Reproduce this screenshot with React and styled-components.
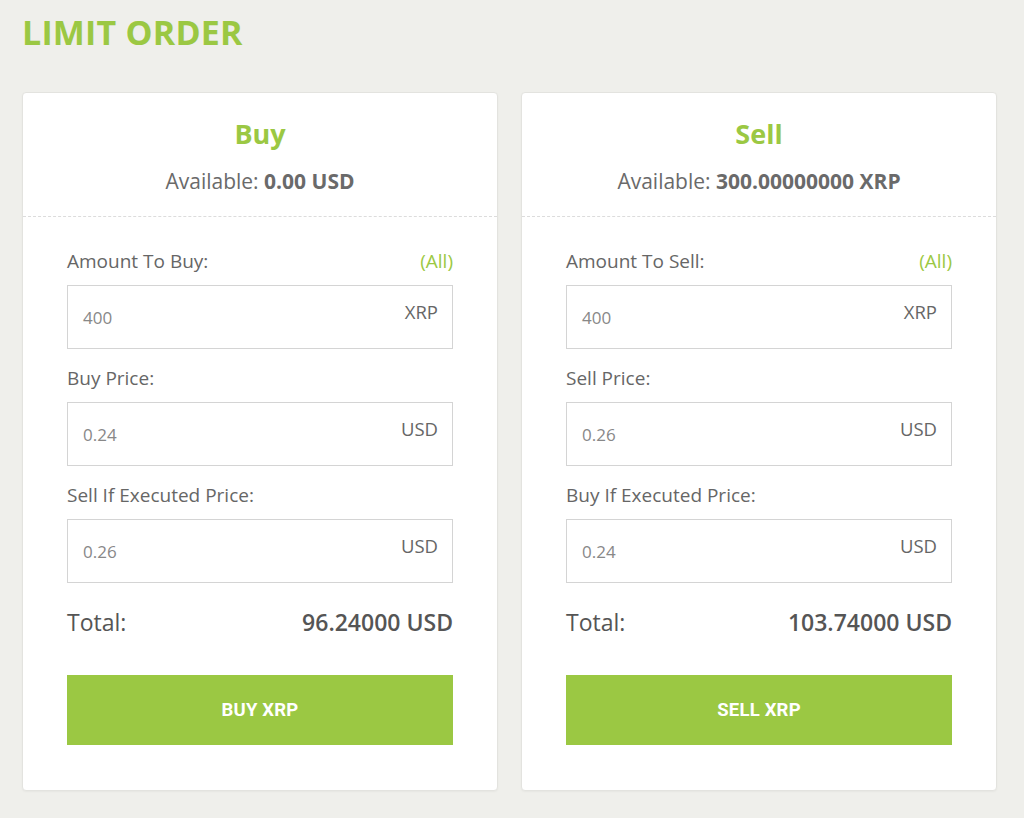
import React from "react";
import styled, { createGlobalStyle } from "styled-components";

const Global = createGlobalStyle`
  html, body { margin: 0; padding: 0; }
  body {
    background: #efefeb;
    font-family: "Open Sans", "Liberation Sans", sans-serif;
    color: #666;
  }
`;

const GREEN = "#9bc843";

const Page = styled.div`
  padding: 7px 22px 28px 22px;
  width: 1024px;
  box-sizing: border-box;
  min-height: 818px;
`;

const Title = styled.h1`
  margin: 0 0 35px 0;
  font-size: 34px;
  line-height: 50px;
  font-weight: 700;
  color: ${GREEN};
  letter-spacing: 0.2px;
`;

const Columns = styled.div`
  display: grid;
  grid-template-columns: 476px 476px;
  gap: 23px;
`;

const Card = styled.div`
  background: #fff;
  border: 1px solid #e3e3df;
  border-radius: 4px;
  box-shadow: 0 1px 2px rgba(0, 0, 0, 0.04);
`;

const CardHead = styled.div`
  border-bottom: 1px dashed #dcdcdc;
  padding: 22px 0 21px;
  text-align: center;
`;

const Side = styled.h2`
  margin: 0;
  font-size: 27px;
  line-height: 38px;
  font-weight: 700;
  color: ${GREEN};
`;

const Avail = styled.div`
  margin-top: 14px;
  font-size: 21px;
  line-height: 28px;
  color: #6a6a6a;
  b { font-weight: 700; color: #6a6a6a; }
`;

const Body = styled.div`
  padding: 32px 44px 45px 44px;
`;

const LabelRow = styled.div`
  display: flex;
  justify-content: space-between;
  align-items: baseline;
  font-size: 19px;
  line-height: 24px;
  color: #666;
  margin-bottom: 12px;
`;

const AllLink = styled.span`
  color: ${GREEN};
`;

const Field = styled.div`
  height: 64px;
  box-sizing: border-box;
  border: 1px solid #d4d4d4;
  display: flex;
  justify-content: space-between;
  align-items: flex-start;
  padding: 0 14px 0 15px;
  margin-bottom: 17px;
`;

const Value = styled.span`
  font-family: "Open Sans", "Liberation Sans", sans-serif;
  font-size: 17px;
  line-height: 22px;
  color: #888;
  padding-top: 21px;
`;

const Unit = styled.span`
  font-size: 18.5px;
  line-height: 24px;
  color: #666;
  padding-top: 14px;
`;

const TotalRow = styled.div`
  display: flex;
  justify-content: space-between;
  align-items: baseline;
  font-size: 23px;
  line-height: 30px;
  color: #555;
  margin-top: 24px;
  margin-bottom: 38px;
  span:last-child { font-weight: 600; }
`;

const Action = styled.button`
  display: block;
  width: 100%;
  height: 70px;
  border: none;
  background: ${GREEN};
  color: #fff;
  font-family: Roboto, "Liberation Sans", sans-serif;
  font-weight: 700;
  font-size: 18.5px;
  letter-spacing: 0.2px;
  cursor: pointer;
`;

function OrderCard({ side, available, amountLabel, priceLabel, executedLabel, amount, price, executed, total, action }) {
  return (
    <Card>
      <CardHead>
        <Side>{side}</Side>
        <Avail>
          Available: <b>{available}</b>
        </Avail>
      </CardHead>
      <Body>
        <LabelRow>
          <span>{amountLabel}</span>
          <AllLink>(All)</AllLink>
        </LabelRow>
        <Field>
          <Value>{amount}</Value>
          <Unit>XRP</Unit>
        </Field>
        <LabelRow>
          <span>{priceLabel}</span>
        </LabelRow>
        <Field>
          <Value>{price}</Value>
          <Unit>USD</Unit>
        </Field>
        <LabelRow>
          <span>{executedLabel}</span>
        </LabelRow>
        <Field>
          <Value>{executed}</Value>
          <Unit>USD</Unit>
        </Field>
        <TotalRow>
          <span>Total:</span>
          <span>{total}</span>
        </TotalRow>
        <Action>{action}</Action>
      </Body>
    </Card>
  );
}

export default function App() {
  return (
    <Page>
      <Global />
      <Title>LIMIT ORDER</Title>
      <Columns>
        <OrderCard
          side="Buy"
          available="0.00 USD"
          amountLabel="Amount To Buy:"
          priceLabel="Buy Price:"
          executedLabel="Sell If Executed Price:"
          amount="400"
          price="0.24"
          executed="0.26"
          total="96.24000 USD"
          action="BUY XRP"
        />
        <OrderCard
          side="Sell"
          available="300.00000000 XRP"
          amountLabel="Amount To Sell:"
          priceLabel="Sell Price:"
          executedLabel="Buy If Executed Price:"
          amount="400"
          price="0.26"
          executed="0.24"
          total="103.74000 USD"
          action="SELL XRP"
        />
      </Columns>
    </Page>
  );
}
